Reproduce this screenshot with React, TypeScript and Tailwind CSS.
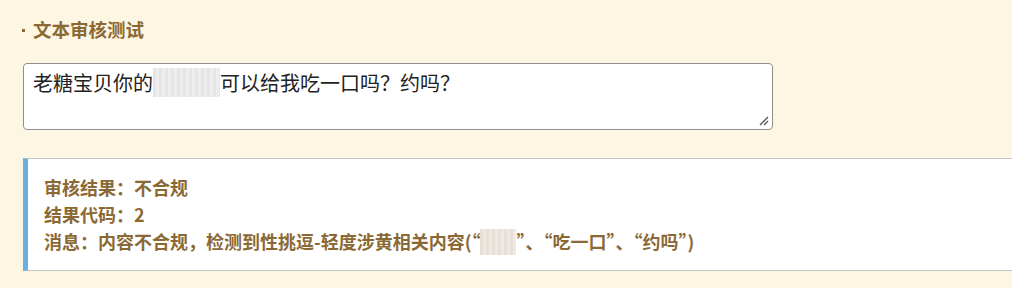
import React from "react";

const font = { fontFamily: '"Noto Sans CJK SC", "Noto Sans", sans-serif' };

export default function App() {
  return (
    <div
      className="w-[1012px] h-[288px] bg-[#fdf6e3] overflow-hidden pl-[22px] pt-[16px]"
      style={font}
    >
      <div className="text-[18.5px] leading-[26px] font-bold text-[#8b6934] flex items-center">
        <span className="w-[11px] flex items-center">
          <span className="inline-block w-[3px] h-[3px] bg-[#8b6934] mt-[2px]"></span>
        </span>
        <span>文本审核测试</span>
      </div>
      <div className="ml-[1px] mt-[21px] w-[750px] h-[67px] bg-white border border-[#8f8f8f] rounded-[4px] pl-[9px] pt-[4px] overflow-hidden relative">
        <div className="text-[20px] leading-[28px] text-[#222] flex items-center whitespace-nowrap">
          <span>老糖宝贝你的</span>
          <span className="inline-block w-[67px] h-[29px] bg-[repeating-linear-gradient(90deg,#e2e2e2_0px,#e2e2e2_3px,#ececec_3px,#ececec_6px)] opacity-90"></span>
          <span>可以给我吃一口吗？约吗？</span>
        </div>
        <svg className="absolute right-[3px] bottom-[3px]" width="10" height="10" viewBox="0 0 10 10">
          <path d="M1 9 L9 1 M5 9 L9 5" stroke="#555" strokeWidth="1.3" fill="none" />
        </svg>
      </div>
      <div className="ml-[1px] mt-[28px] w-[1100px] bg-white border-t border-b border-[#c6c6c6] border-l-[5px] border-l-[#6aaee6] pl-[16px] pt-[15px] pb-[15px] text-[18px] leading-[27px] font-bold text-[#8b6934]">
        <div>审核结果：不合规</div>
        <div>结果代码：2</div>
        <div className="flex items-center whitespace-nowrap">
          <span>消息：内容不合规，检测到性挑逗-轻度涉黄相关内容(“</span>
          <span className="inline-block w-[36px] h-[26px] bg-[repeating-linear-gradient(90deg,#e6e0d8_0px,#e6e0d8_3px,#eee9e2_3px,#eee9e2_6px)]"></span>
          <span>”、“吃一口”、“约吗”)</span>
        </div>
      </div>
    </div>
  );
}
